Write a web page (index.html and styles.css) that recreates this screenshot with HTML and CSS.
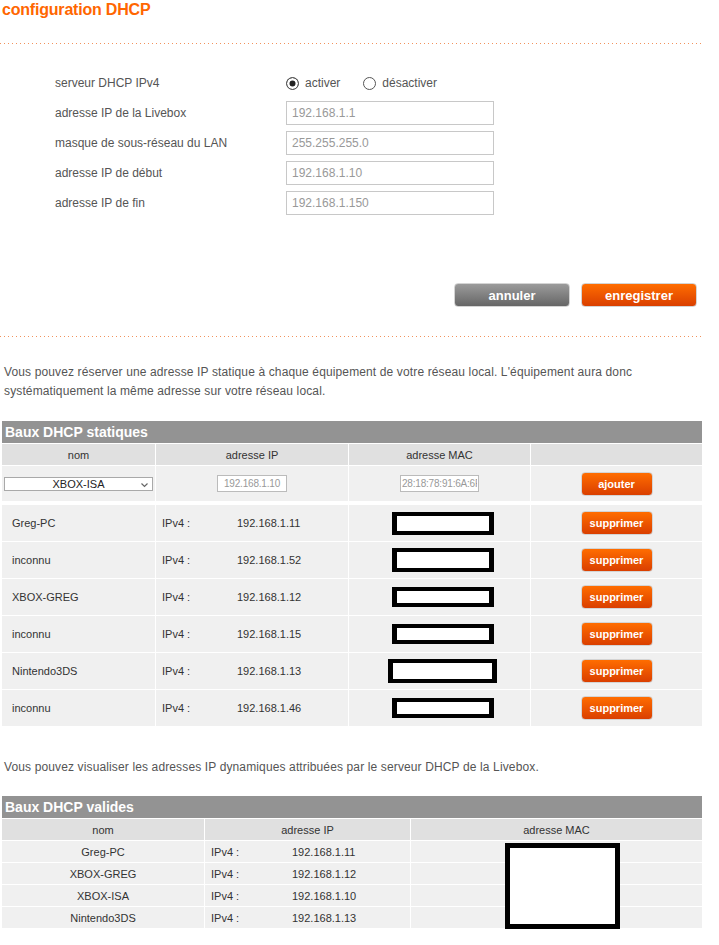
FILE: index.html
```html
<!DOCTYPE html>
<html lang="fr">
<head>
  <meta charset="UTF-8">
  <title>configuration DHCP</title>
  <link rel="stylesheet" href="styles.css">
</head>
<body>
  <div class="page">
    <h1 class="page-title">configuration DHCP</h1>
    <div class="dots"></div>

    <form class="dhcp-form">
      <div class="form-row">
        <span class="form-label">serveur DHCP IPv4</span>
        <div class="radios">
          <label class="radio"><input type="radio" name="dhcp" checked> activer</label>
          <label class="radio"><input type="radio" name="dhcp"> désactiver</label>
        </div>
      </div>
      <div class="form-row">
        <span class="form-label">adresse IP de la Livebox</span>
        <input class="field" type="text" value="192.168.1.1">
      </div>
      <div class="form-row">
        <span class="form-label">masque de sous-réseau du LAN</span>
        <input class="field" type="text" value="255.255.255.0">
      </div>
      <div class="form-row">
        <span class="form-label">adresse IP de début</span>
        <input class="field" type="text" value="192.168.1.10">
      </div>
      <div class="form-row">
        <span class="form-label">adresse IP de fin</span>
        <input class="field" type="text" value="192.168.1.150">
      </div>
    </form>

    <div class="actions">
      <button class="btn btn-grey">annuler</button>
      <button class="btn btn-orange">enregistrer</button>
    </div>
    <div class="dots"></div>

    <p class="intro">Vous pouvez réserver une adresse IP statique à chaque équipement de votre réseau local. L'équipement aura donc systématiquement la même adresse sur votre réseau local.</p>

    <section class="leases">
      <div class="leases-title">Baux DHCP statiques</div>
      <table class="leases-table static">
        <colgroup>
          <col style="width:153px"><col style="width:192px"><col style="width:181px"><col style="width:171px">
        </colgroup>
        <thead>
          <tr><th>nom</th><th>adresse IP</th><th>adresse MAC</th><th></th></tr>
        </thead>
        <tbody>
          <tr class="add-row">
            <td>
              <div class="select-wrap">
                <select class="device-select"><option>XBOX-ISA</option></select>
                <svg class="select-arrow" width="7" height="5" viewBox="0 0 7 5"><polyline points="0.5,0.5 3.5,3.5 6.5,0.5" fill="none" stroke="#666" stroke-width="1.2"/></svg>
              </div>
            </td>
            <td class="center"><input class="mini-field ip-field" type="text" value="192.168.1.10"></td>
            <td class="center"><input class="mini-field mac-field" type="text" value="28:18:78:91:6A:6F"></td>
            <td class="center"><button class="btn btn-orange btn-small">ajouter</button></td>
          </tr>
          <tr>
            <td class="name">Greg-PC</td>
            <td class="ip"><span class="ip-label">IPv4 :</span>192.168.1.11</td>
            <td class="mac"><span class="mask"></span></td>
            <td class="center"><button class="btn btn-orange btn-small">supprimer</button></td>
          </tr>
          <tr>
            <td class="name">inconnu</td>
            <td class="ip"><span class="ip-label">IPv4 :</span>192.168.1.52</td>
            <td class="mac"><span class="mask mask-tall"></span></td>
            <td class="center"><button class="btn btn-orange btn-small">supprimer</button></td>
          </tr>
          <tr>
            <td class="name">XBOX-GREG</td>
            <td class="ip"><span class="ip-label">IPv4 :</span>192.168.1.12</td>
            <td class="mac"><span class="mask mask-thin"></span></td>
            <td class="center"><button class="btn btn-orange btn-small">supprimer</button></td>
          </tr>
          <tr>
            <td class="name">inconnu</td>
            <td class="ip"><span class="ip-label">IPv4 :</span>192.168.1.15</td>
            <td class="mac"><span class="mask mask-thin"></span></td>
            <td class="center"><button class="btn btn-orange btn-small">supprimer</button></td>
          </tr>
          <tr>
            <td class="name">Nintendo3DS</td>
            <td class="ip"><span class="ip-label">IPv4 :</span>192.168.1.13</td>
            <td class="mac"><span class="mask mask-wide"></span></td>
            <td class="center"><button class="btn btn-orange btn-small">supprimer</button></td>
          </tr>
          <tr>
            <td class="name">inconnu</td>
            <td class="ip"><span class="ip-label">IPv4 :</span>192.168.1.46</td>
            <td class="mac"><span class="mask mask-thin"></span></td>
            <td class="center"><button class="btn btn-orange btn-small">supprimer</button></td>
          </tr>
        </tbody>
      </table>
    </section>

    <p class="intro intro-dyn">Vous pouvez visualiser les adresses IP dynamiques attribuées par le serveur DHCP de la Livebox.</p>

    <section class="leases valid">
      <div class="leases-title">Baux DHCP valides</div>
      <table class="leases-table dynamic">
        <colgroup>
          <col style="width:202px"><col style="width:205px"><col style="width:291px">
        </colgroup>
        <thead>
          <tr><th>nom</th><th>adresse IP</th><th>adresse MAC</th></tr>
        </thead>
        <tbody>
          <tr><td class="center">Greg-PC</td><td class="ip"><span class="ip-label">IPv4 :</span>192.168.1.11</td><td></td></tr>
          <tr><td class="center">XBOX-GREG</td><td class="ip"><span class="ip-label">IPv4 :</span>192.168.1.12</td><td></td></tr>
          <tr><td class="center">XBOX-ISA</td><td class="ip"><span class="ip-label">IPv4 :</span>192.168.1.10</td><td></td></tr>
          <tr><td class="center">Nintendo3DS</td><td class="ip"><span class="ip-label">IPv4 :</span>192.168.1.13</td><td></td></tr>
        </tbody>
      </table>
      <!-- redacted MAC addresses -->
      <div class="mask-block"></div>
    </section>
  </div>
</body>
</html>
```

FILE: styles.css
```css
body {
  margin: 0;
  font-family: "Liberation Sans", Arial, sans-serif;
  background: #fff;
  color: #555;
}

.page {
  width: 703px;
}

.page-title {
  margin: 0;
  padding-left: 2px;
  font-size: 16px;
  line-height: 20px;
  letter-spacing: -0.2px;
  color: #ff6600;
}

.dots {
  height: 1px;
  margin-top: 23px;
  background-image: linear-gradient(to right, #f2925c 1px, transparent 1px);
  background-size: 4px 1px;
}

.dhcp-form {
  padding: 24px 0 0 55px;
}

.form-row {
  display: grid;
  grid-template-columns: 231px 208px;
  align-items: center;
  height: 30px;
  font-size: 12px;
}

.radios {
  display: flex;
  align-items: center;
  gap: 23px;
}

.radio {
  display: flex;
  align-items: center;
  gap: 6px;
}

.radio input {
  appearance: none;
  margin: 0;
  width: 13px;
  height: 13px;
  border: 1px solid #555;
  border-radius: 50%;
  background: #fff;
}

.radio input:checked {
  background: #222;
  box-shadow: inset 0 0 0 2.5px #fff;
}

.field {
  box-sizing: border-box;
  width: 208px;
  height: 24px;
  margin: 0;
  padding: 0 5px;
  border: 1px solid #c8c8c8;
  font-family: inherit;
  font-size: 12px;
  color: #999;
}

.actions {
  display: flex;
  justify-content: flex-end;
  gap: 11px;
  margin-top: 65px;
  padding-right: 6px;
}

.btn {
  box-sizing: border-box;
  width: 116px;
  height: 24px;
  padding: 0;
  border: 1px solid #d4d4d4;
  border-radius: 4px;
  font-family: inherit;
  font-size: 13px;
  font-weight: bold;
  color: #fff;
  cursor: pointer;
}

.btn-grey {
  background: linear-gradient(#9b9b9b, #666);
}

.btn-orange {
  background: linear-gradient(#ff6d00, #da3f00);
}

.btn-small {
  width: 72px;
  height: 24px;
  font-size: 11px;
}

.actions + .dots {
  margin-top: 29px;
}

.intro {
  margin: 26px 0 0;
  padding-left: 4px;
  font-size: 12px;
  line-height: 19px;
  letter-spacing: 0.13px;
  color: #555;
}

.intro-dyn {
  margin-top: 31px;
}

.leases {
  position: relative;
  width: 700px;
  margin: 20px 0 0 2px;
}

.valid {
  margin-top: 19px;
}

.leases-title {
  height: 22px;
  padding-left: 3px;
  background: #939393;
  font-size: 14px;
  font-weight: bold;
  line-height: 22px;
  color: #fff;
}

.leases-table {
  table-layout: fixed;
  width: 702px;
  margin: 0 -1px;
  border-collapse: separate;
  border-spacing: 1px;
  font-size: 11px;
  color: #333;
}

.leases-table th,
.leases-table td {
  padding: 0;
  background: #f0f0f0;
  vertical-align: middle;
  white-space: nowrap;
  overflow: hidden;
}

.leases-table th {
  background: #e0e0e0;
  font-weight: normal;
  text-align: center;
}

.leases-table thead tr {
  height: 21px;
}

.static tbody tr {
  height: 36px;
}

.static .add-row {
  height: 38px;
}

.static .add-row td {
  border-bottom: 3px solid #fff;
}

.dynamic tbody tr {
  height: 21px;
}

.center {
  text-align: center;
}

.name {
  padding-left: 10px !important;
}

.ip {
  padding-left: 6px !important;
}

.ip-label {
  display: inline-block;
  width: 75px;
}

.dynamic .ip-label {
  width: 81px;
}

.mac {
  padding-left: 6px !important;
  text-align: center;
}

.select-wrap {
  position: relative;
  width: 149px;
  margin-left: 2px;
}

.device-select {
  appearance: none;
  display: block;
  box-sizing: border-box;
  width: 149px;
  height: 14px;
  margin: 0;
  padding: 0;
  border: 1px solid #a9a9a9;
  background: #fff;
  font-family: inherit;
  font-size: 11px;
  line-height: 12px;
  text-align: center;
  text-align-last: center;
  color: #222;
}

.select-arrow {
  position: absolute;
  right: 5px;
  top: 6px;
}

.mini-field {
  box-sizing: border-box;
  height: 17px;
  margin: 0;
  padding: 0 1px;
  border: 1px solid #bbb;
  background: #fff;
  font-family: inherit;
  font-size: 10px;
  letter-spacing: -0.2px;
  color: #999;
}

.ip-field {
  width: 70px;
  text-align: center;
}

.mac-field {
  width: 79px;
}

.mask {
  display: inline-block;
  box-sizing: border-box;
  width: 102px;
  height: 23px;
  border: 4px solid #000;
  border-left-width: 5px;
  border-right-width: 5px;
  background: #fff;
  vertical-align: middle;
}

.mask-tall {
  height: 24px;
}

.mask-thin {
  height: 20px;
}

.mask-wide {
  width: 109px;
  height: 24px;
}

.mask-block {
  position: absolute;
  left: 503px;
  top: 47px;
  box-sizing: border-box;
  width: 115px;
  height: 86px;
  border: 5px solid #000;
  background: #fff;
}
```
